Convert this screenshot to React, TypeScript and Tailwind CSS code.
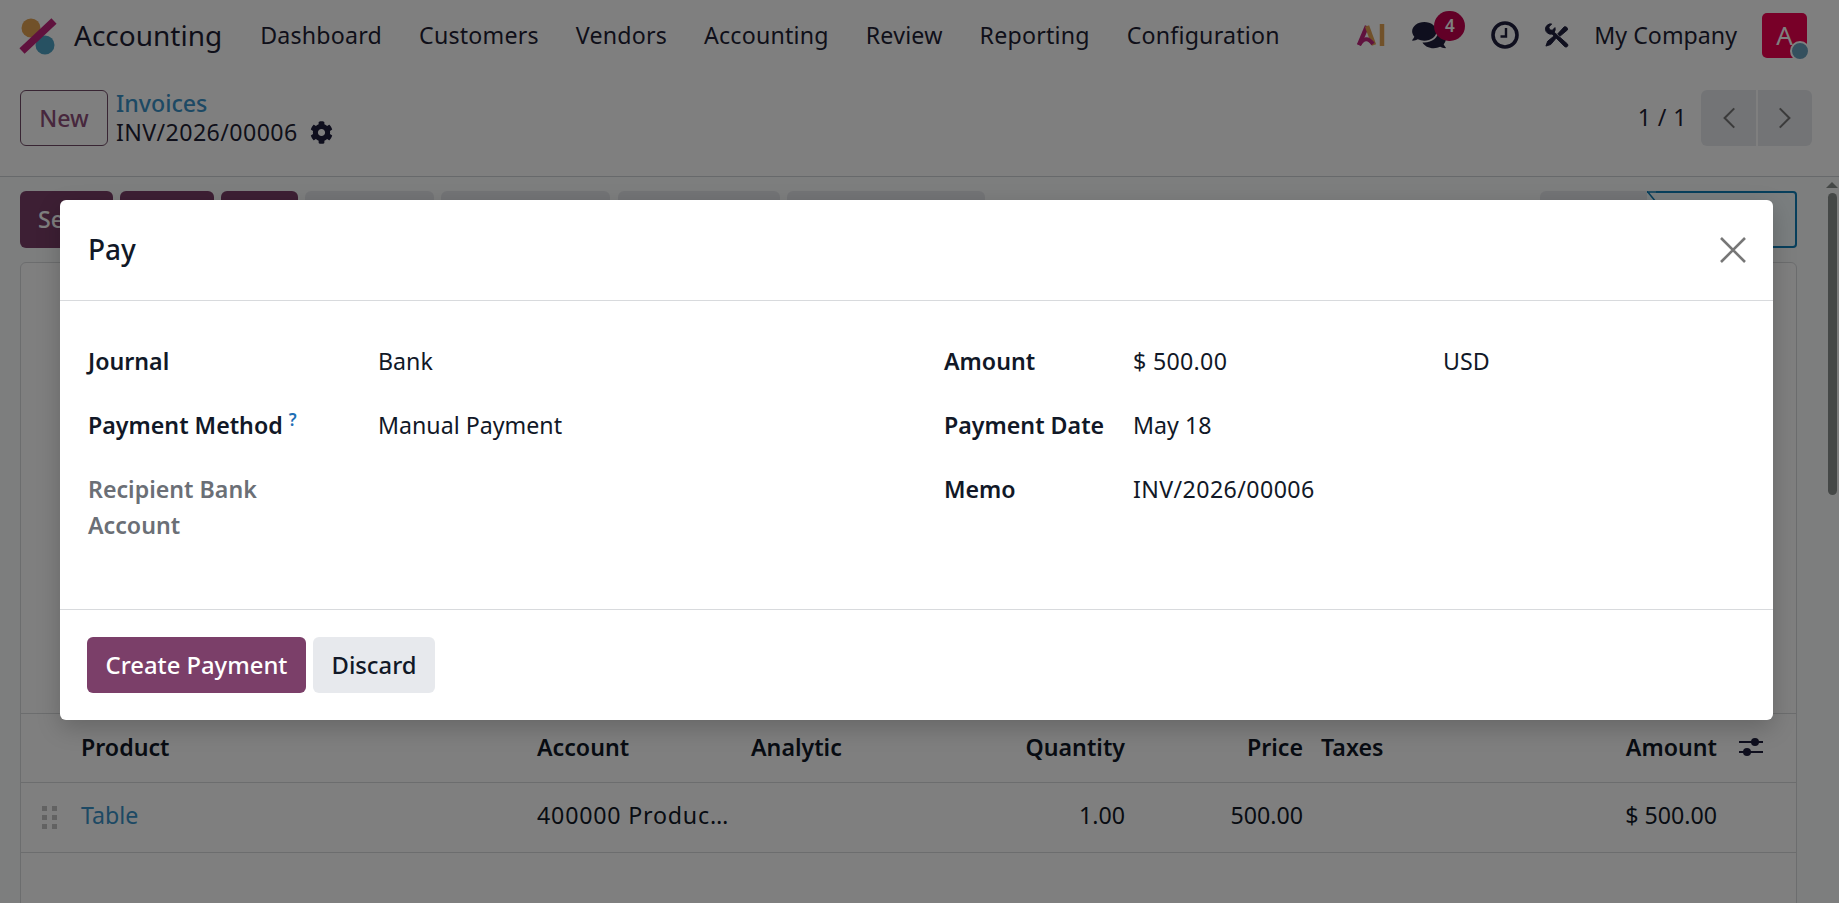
import { FaCog, FaComments } from "react-icons/fa";

const navItems = ["Dashboard", "Customers", "Vendors", "Accounting", "Review", "Reporting", "Configuration"];

const tableCols = "grid grid-cols-[60px_456px_214px_200px_174px_178px_200px_214px_1fr]";

function Logo() {
  return (
    <svg viewBox="0 0 40 40" className="w-[40px] h-[40px] shrink-0">
      <circle cx="13" cy="13" r="9.5" fill="#e2a253" />
      <circle cx="27" cy="30" r="9.5" fill="#4fa3c4" />
      <path d="M4 36 L36 6" stroke="#c0247c" strokeWidth="7.5" />
    </svg>
  );
}

function AiMark() {
  return (
    <svg viewBox="0 0 30 24" className="w-[30px] h-[24px]">
      <path d="M3 22 L11 3" stroke="#c0247c" strokeWidth="4.5" fill="none" />
      <path d="M11 3 L18 22" stroke="#e2a253" strokeWidth="4.5" fill="none" />
      <path d="M3 22 Q10 11 17 21" stroke="#c0247c" strokeWidth="4" fill="none" />
      <path d="M26 1 V23" stroke="#e2a253" strokeWidth="4.5" />
    </svg>
  );
}

function ClockIcon() {
  return (
    <svg viewBox="0 0 28 28" className="w-[28px] h-[28px]">
      <circle cx="14" cy="14" r="12" stroke="#1f1f3d" strokeWidth="3.6" fill="none" />
      <path d="M15 7 V15.5 H9.5" stroke="#1f1f3d" strokeWidth="2.4" fill="none" />
    </svg>
  );
}

function ToolsIcon() {
  return (
    <svg viewBox="0 0 26 26" className="w-[25px] h-[25px]" fill="#1f1f3d" stroke="#1f1f3d" strokeWidth="1">
      <path d="M1.5 6.5 A5.5 5.5 0 0 1 8 1 L5 4.2 L5.8 7 L8.6 7.6 L11.4 4.8 A5.5 5.5 0 0 1 10.6 9.6 L24.4 21.8 A2 2 0 0 1 21.6 24.6 L8.4 11.4 A5.5 5.5 0 0 1 1.5 6.5 Z" />
      <path d="M2 24 L3.8 19 L11.5 12.6 L13.6 14.6 L7 22.4 Z" />
      <path d="M14.4 11.2 L21 4 A2.6 2.6 0 0 1 24.4 7.2 L16.8 13.6 Z" />
    </svg>
  );
}

function AdjustIcon() {
  return (
    <svg viewBox="0 0 26 22" className="w-[26px] h-[22px]">
      <path d="M1 6 H25 M1 16 H25" stroke="#1f1f3d" strokeWidth="2" />
      <circle cx="17" cy="6" r="4" fill="#1f1f3d" />
      <circle cx="9" cy="16" r="4" fill="#1f1f3d" />
    </svg>
  );
}

function Grip() {
  return (
    <div className="grid grid-cols-2 gap-x-[5px] gap-y-[4px] w-[15px] ml-[21px]">
      {[0, 1, 2, 3, 4, 5].map((i) => (
        <span key={i} className="h-[5px] bg-[#c4c4c4]" />
      ))}
    </div>
  );
}

function PayDialog() {
  return (
    <div className="w-[1713px] h-[520px] flex flex-col bg-white rounded-[6px] shadow-[0_8px_24px_rgba(0,0,0,0.2)] text-[#111827]">
      <div className="h-[101px] shrink-0 flex items-center justify-between pl-[28px] pr-[26px] border-b border-[#d8dadd]">
        <h4 className="text-[28px] font-medium -mt-[2px]">Pay</h4>
        <svg viewBox="0 0 28 28" className="w-[28px] h-[28px]">
          <path d="M2 2 L26 26 M26 2 L2 26" stroke="#777" strokeWidth="2.6" />
        </svg>
      </div>
      <div className="h-[308px] shrink-0 pl-[28px] pt-[42px] grid grid-cols-[290px_566px_189px_310px_1fr] auto-rows-[64px] text-[23.2px] leading-[36px]">
        <div className="font-semibold">Journal</div>
        <div>Bank</div>
        <div className="font-semibold">Amount</div>
        <div className="tracking-[0.3px]">$ 500.00</div>
        <div>USD</div>

        <div className="font-semibold">
          Payment Method <sup className="text-[#1f6fb5] text-[17px] font-semibold">?</sup>
        </div>
        <div>Manual Payment</div>
        <div className="font-semibold">Payment Date</div>
        <div className="col-span-2">May 18</div>

        <div className="font-semibold text-[#6b6f76] w-[200px]">Recipient Bank Account</div>
        <div />
        <div className="font-semibold">Memo</div>
        <div className="col-span-2 tracking-[0.4px]">INV/2026/00006</div>
      </div>
      <div className="flex-1 border-t border-[#d8dadd] pl-[27px] pt-[27px] flex gap-[7px] items-start">
        <button className="h-[56px] w-[219px] pt-[2px] rounded-[6px] bg-[#7b3f69] text-white text-[23.8px] font-medium">
          Create Payment
        </button>
        <button className="h-[56px] w-[122px] pt-[2px] rounded-[6px] bg-[#e7e9ed] text-[#111827] text-[23.8px] font-medium">
          Discard
        </button>
      </div>
    </div>
  );
}

export default function App() {
  return (
    <div className="relative w-full h-[903px] overflow-hidden bg-white font-['Noto_Sans',sans-serif] text-[23.2px] text-[#1f1f35]">
      {/* Navbar */}
      <div className="h-[70px] flex items-center pl-[18px] pr-[32px] bg-white">
        <Logo />
        <span className="ml-[16px] text-[28px] mr-[38px]">Accounting</span>
        <div className="flex gap-[37px] tracking-[0.2px]">
          {navItems.map((item) => (
            <span key={item}>{item}</span>
          ))}
        </div>
        <div className="ml-auto flex items-center">
          <AiMark />
          <div className="relative ml-[26px] w-[53px] h-[30px] flex items-center">
            <FaComments className="w-[34px] h-[30px] text-[#1f1f3d]" />
            <span className="absolute left-[22px] top-[-9px] w-[31px] h-[30px] rounded-full bg-[#c5004f] text-white text-[17px] font-semibold flex items-center justify-center">
              4
            </span>
          </div>
          <div className="ml-[26px]">
            <ClockIcon />
          </div>
          <div className="ml-[25px] flex">
            <ToolsIcon />
          </div>
          <span className="ml-[25px]">My Company</span>
          <div className="relative ml-[25px] w-[45px] h-[45px] rounded-[5px] bg-[#f00050] text-white text-[26px] flex items-center justify-center">
            A
            <span className="absolute right-[-3px] bottom-[-3px] w-[20px] h-[20px] rounded-full bg-[#6aa0bd] border-2 border-white" />
          </div>
        </div>
      </div>

      {/* Control panel */}
      <div className="h-[107px] border-b border-[#cfd2d6] flex items-start pl-[20px] pr-[27px] pt-[20px]">
        <button className="w-[88px] h-[56px] rounded-[6px] border border-[#714b67] bg-white text-[#8f4f7a] font-medium">
          New
        </button>
        <div className="ml-[8px] leading-[29px] -mt-[1px]">
          <div className="text-[#3a93c8] font-medium">Invoices</div>
          <div className="flex items-center gap-[12px] tracking-[0.4px]">
            INV/2026/00006 <FaCog className="w-[23px] h-[23px] text-[#1f1f3d]" />
          </div>
        </div>
        <div className="ml-auto flex items-center">
          <span className="mr-[14px] tracking-[0.4px] -mt-[2px]">1 / 1</span>
          <div className="flex gap-[2px]">
            <div className="w-[55px] h-[56px] rounded-l-[6px] bg-[#e7e9ed] flex items-center justify-center">
              <svg viewBox="0 0 16 26" className="w-[14px] h-[24px]">
                <path d="M14 2 L3 13 L14 24" stroke="#777" strokeWidth="2.4" fill="none" />
              </svg>
            </div>
            <div className="w-[54px] h-[56px] rounded-r-[6px] bg-[#e7e9ed] flex items-center justify-center">
              <svg viewBox="0 0 16 26" className="w-[14px] h-[24px]">
                <path d="M2 2 L13 13 L2 24" stroke="#777" strokeWidth="2.4" fill="none" />
              </svg>
            </div>
          </div>
        </div>
      </div>

      {/* Form */}
      <div className="bg-[#fbfcfc] h-[726px] pl-[20px] pr-[42px] pt-[14px]">
        <div className="h-[57px] flex">
          <div className="w-[93px] rounded-[6px] bg-[#7b3f69] text-white font-medium pl-[18px] flex items-center">
            Send
          </div>
          <div className="ml-[7px] w-[94px] rounded-[6px] bg-[#7b3f69]" />
          <div className="ml-[7px] w-[77px] rounded-[6px] bg-[#7b3f69]" />
          <div className="ml-[7px] w-[129px] rounded-[6px] bg-[#e7e9ed]" />
          <div className="ml-[7px] w-[169px] rounded-[6px] bg-[#e7e9ed]" />
          <div className="ml-[8px] w-[162px] rounded-[6px] bg-[#e7e9ed]" />
          <div className="ml-[7px] w-[198px] rounded-[6px] bg-[#e7e9ed]" />
          <div className="ml-auto w-[107px] rounded-l-[6px] bg-[#e7e9ed]" />
          <div className="relative w-[150px] rounded-r-[4px] border-2 border-l-0 border-[#0e7fb8] bg-[#f5fdff]">
            <svg viewBox="0 0 10 12" className="absolute left-0 top-[-2px] w-[10px] h-[12px]">
              <path d="M0 0 L9 11 V0 Z" fill="#f5fdff" />
              <path d="M0 1 H10 M0 0 L9 11" stroke="#0e7fb8" strokeWidth="1.5" />
            </svg>
          </div>
        </div>
        <div className="mt-[14px] h-[700px] bg-white border border-[#d8dadd] rounded-t-[6px] pt-[450px]">
          <div className={`${tableCols} h-[70px] pb-[2px] items-center border-t border-b border-[#d8dadd] font-semibold text-[#111827]`}>
            <div />
            <div>Product</div>
            <div>Account</div>
            <div>Analytic</div>
            <div className="text-right">Quantity</div>
            <div className="text-right">Price</div>
            <div className="pl-[18px]">Taxes</div>
            <div className="text-right">Amount</div>
            <div className="pl-[21px] flex">
              <AdjustIcon />
            </div>
          </div>
          <div className={`${tableCols} h-[70px] items-center border-b border-[#d8dadd] text-[#111827]`}>
            <Grip />
            <div className="text-[#3a93c8] -mt-[4px]">Table</div>
            <div className="-mt-[4px] tracking-[0.8px]">400000 Produc…</div>
            <div />
            <div className="text-right -mt-[4px]">1.00</div>
            <div className="text-right -mt-[4px]">500.00</div>
            <div />
            <div className="text-right -mt-[4px]">$ 500.00</div>
            <div />
          </div>
        </div>
      </div>

      {/* Scrollbar */}
      <div className="absolute right-[2px] top-[193px] w-[9px] h-[302px] rounded-full bg-[#8a908e]" />
      <div className="absolute right-[1px] top-[182px] w-0 h-0 border-x-[6px] border-x-transparent border-b-[6px] border-b-[#8a908e]" />

      {/* Backdrop and dialog */}
      <div className="absolute inset-0 bg-black/50 pl-[60px] pt-[200px]">
        <PayDialog />
      </div>
    </div>
  );
}
